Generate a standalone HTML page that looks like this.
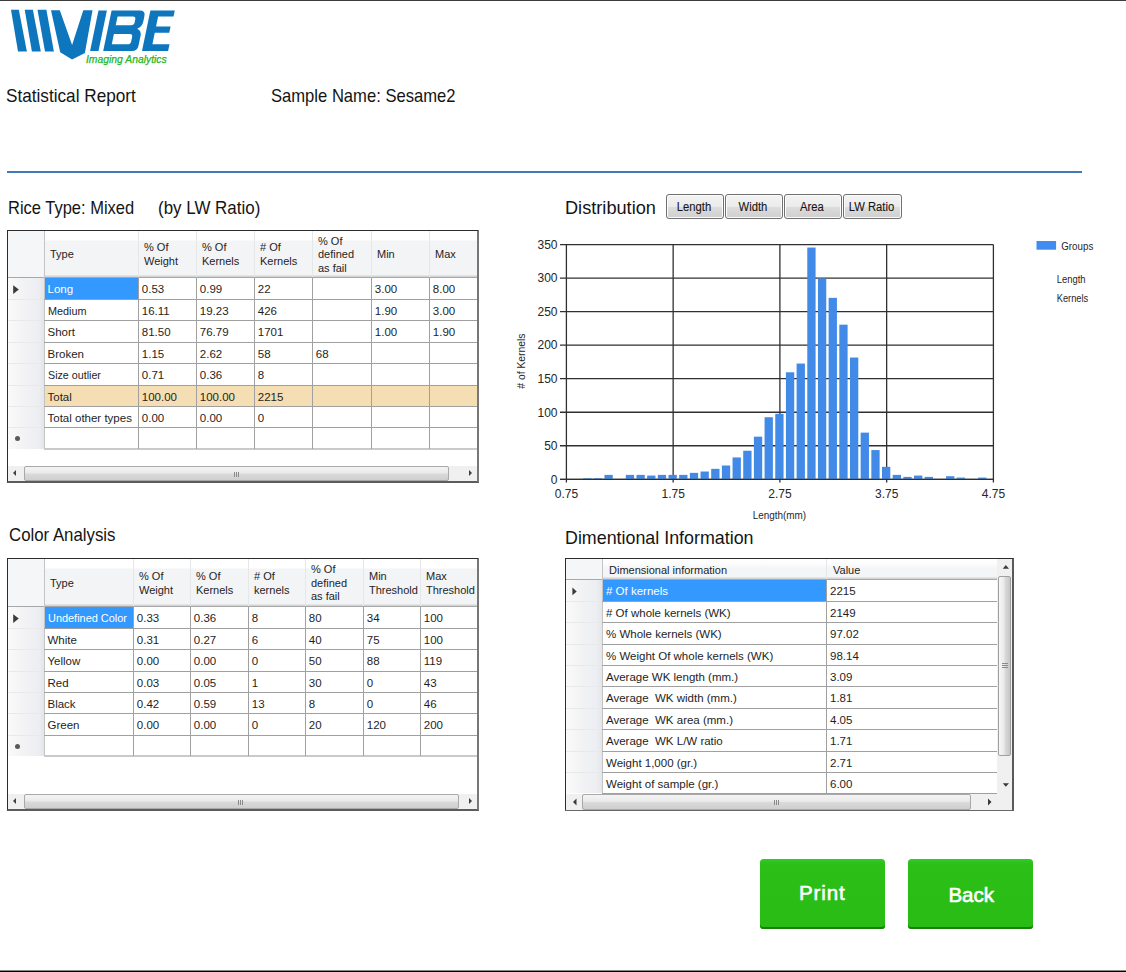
<!DOCTYPE html><html><head><meta charset="utf-8"><style>
*{margin:0;padding:0;box-sizing:border-box}
html,body{width:1126px;height:972px;overflow:hidden;background:#fff;font-family:"Liberation Sans",sans-serif;color:#000}
.a{position:absolute;white-space:nowrap}
.h{font-size:17px;color:#1a1a1a;line-height:20px}
.g{font-size:11px;line-height:13px;color:#1e1e1e}
.grid{position:absolute;background:#fff;border:1px solid #404040}
.cl{position:absolute;background:#a0a0a0}
</style></head><body>
<div class="a" style="left:0;top:0;width:1126px;height:1px;background:#3c3c3c"></div>
<div class="a" style="left:0;top:970px;width:1126px;height:1px;background:#8a8a8a"></div>
<div class="a" style="left:0;top:971px;width:1126px;height:1px;background:#000"></div>
<svg class="a" style="left:0;top:0" width="200" height="70" viewBox="0 0 200 70"><polygon fill="#0e76bc" points="11.0,9.7 18.8,9.7 26.9,51.4 18.0,51.4"/><polygon fill="#0e76bc" points="24.7,9.7 32.9,9.7 40.8,51.4 31.9,51.4"/><polygon fill="#0e76bc" points="37.5,9.7 46.4,9.7 53.9,51.4 45.0,51.4"/><polygon fill="#0e76bc" points="51.0,10.2 59.8,10.2 72.1,45.0 83.3,10.2 92.5,10.2 84.9,53.0 72.1,59.4 60.2,52.2"/><polygon fill="#0e76bc" points="98.48,10.50 106.88,10.50 98.50,51.00 90.10,51.00"/><path fill="#0e76bc" fill-rule="evenodd" transform="matrix(1,0,-0.2070,1,10.5570,0)" d="M103.2,10.5 H131.5 Q137.2,10.5 137.2,16 V21.5 Q137.2,26.8 132.6,28.7 Q137.4,30.6 137.4,36 V45.5 Q137.4,51 131.9,51 H103.2 Z M110.4,16.4 H125.9 Q128.7,16.4 128.7,19.2 V22.5 Q128.7,25.3 125.9,25.3 H110.4 Z M110.4,34.1 H126.4 Q129.2,34.1 129.2,36.9 V41.4 Q129.2,44.2 126.4,44.2 H110.4 Z"/><path fill="#0e76bc" transform="matrix(1,0,-0.2070,1,10.5570,0)" d="M142,10.5 H166.4 V16.6 H151 V26.6 H165.5 V32.8 H151 V44.2 H168.1 V51 H142 Z"/></svg>
<div class="a" style="left:86px;top:53px;font-size:10.5px;line-height:12px;font-style:italic;color:#22b622;-webkit-text-stroke:0.25px #22b622;transform:scaleX(0.985);transform-origin:0 0">Imaging Analytics</div>
<div class="a" style="left:6.2px;top:87.34px;font-size:18.5px;line-height:18.5px;color:#141414;transform:scaleX(0.9281);transform-origin:0 0">Statistical Report</div>
<div class="a" style="left:270.7px;top:87.14px;font-size:18.5px;line-height:18.5px;color:#141414;transform:scaleX(0.8971);transform-origin:0 0">Sample Name: Sesame2</div>
<div class="a" style="left:7px;top:171px;width:1075px;height:2px;background:#4079b3"></div>
<div class="a" style="left:7.8px;top:199.34px;font-size:18.5px;line-height:18.5px;color:#141414;transform:scaleX(0.8914);transform-origin:0 0">Rice Type: Mixed</div>
<div class="a" style="left:158.3px;top:199.34px;font-size:18.5px;line-height:18.5px;color:#141414;transform:scaleX(0.9155);transform-origin:0 0">(by LW Ratio)</div>
<div class="a" style="left:565.0px;top:199.14px;font-size:18.5px;line-height:18.5px;color:#141414;transform:scaleX(0.9824);transform-origin:0 0">Distribution</div>
<div class="a" style="left:8.7px;top:526.34px;font-size:18.5px;line-height:18.5px;color:#141414;transform:scaleX(0.9086);transform-origin:0 0">Color Analysis</div>
<div class="a" style="left:565.4px;top:529.04px;font-size:18.5px;line-height:18.5px;color:#141414;transform:scaleX(0.9648);transform-origin:0 0">Dimentional Information</div>
<div class="a" style="left:7px;top:230px;width:472px;height:253px;border-style:solid;border-width:1px 2px 2px 1px;border-color:#2c2c2c #777 #5c5c5c #2c2c2c;background:#fff"></div>
<div class="a" style="left:45px;top:231px;width:432px;height:44px;background:linear-gradient(#fff 0,#fff 9px,#f3f4f6 10px,#f3f4f6 100%)"></div>
<div class="a" style="left:45px;top:275px;width:432px;height:1px;background:#e2e3e5"></div>
<div class="a" style="left:45px;top:276px;width:432px;height:1px;background:#d5d5d5"></div>
<div class="a" style="left:8px;top:277px;width:469px;height:1px;background:#a8a8a8"></div>
<div class="a" style="left:8px;top:231px;width:36px;height:46px;background:#f5f6f8"></div>
<div class="a" style="left:8px;top:278px;width:36px;height:171px;background:linear-gradient(90deg,#fafafa 0,#f3f3f5 40%,#eceef1 85%,#e4e5e8 100%)"></div>
<div class="a" style="left:44px;top:231px;width:1px;height:219px;background:#c4c4c4"></div>
<div class="a" style="left:138px;top:231px;width:1px;height:46px;background:#e6e7e9"></div>
<div class="a" style="left:196px;top:231px;width:1px;height:46px;background:#e6e7e9"></div>
<div class="a" style="left:254px;top:231px;width:1px;height:46px;background:#e6e7e9"></div>
<div class="a" style="left:312px;top:231px;width:1px;height:46px;background:#e6e7e9"></div>
<div class="a" style="left:371px;top:231px;width:1px;height:46px;background:#e6e7e9"></div>
<div class="a" style="left:429px;top:231px;width:1px;height:46px;background:#e6e7e9"></div>
<div class="a" style="left:45px;top:386px;width:432px;height:20px;background:#f5deb3"></div>
<div class="a" style="left:45px;top:278px;width:93px;height:21px;background:#3399ff"></div>
<div class="a" style="left:8px;top:299px;width:36px;height:1px;background:#e8e9eb"></div>
<div class="a" style="left:8px;top:320px;width:36px;height:1px;background:#e8e9eb"></div>
<div class="a" style="left:8px;top:342px;width:36px;height:1px;background:#e8e9eb"></div>
<div class="a" style="left:8px;top:363px;width:36px;height:1px;background:#e8e9eb"></div>
<div class="a" style="left:8px;top:385px;width:36px;height:1px;background:#e8e9eb"></div>
<div class="a" style="left:8px;top:406px;width:36px;height:1px;background:#e8e9eb"></div>
<div class="a" style="left:8px;top:427px;width:36px;height:1px;background:#e8e9eb"></div>
<div class="a cl" style="left:44px;top:299px;width:433px;height:1px"></div>
<div class="a cl" style="left:44px;top:320px;width:433px;height:1px"></div>
<div class="a cl" style="left:44px;top:342px;width:433px;height:1px"></div>
<div class="a cl" style="left:44px;top:363px;width:433px;height:1px"></div>
<div class="a cl" style="left:44px;top:385px;width:433px;height:1px"></div>
<div class="a cl" style="left:44px;top:406px;width:433px;height:1px"></div>
<div class="a cl" style="left:44px;top:427px;width:433px;height:1px"></div>
<div class="a" style="left:44px;top:448px;width:433px;height:2px;background:#cacaca"></div>
<div class="a cl" style="left:138px;top:278px;width:1px;height:171px"></div>
<div class="a cl" style="left:196px;top:278px;width:1px;height:171px"></div>
<div class="a cl" style="left:254px;top:278px;width:1px;height:171px"></div>
<div class="a cl" style="left:312px;top:278px;width:1px;height:171px"></div>
<div class="a cl" style="left:371px;top:278px;width:1px;height:171px"></div>
<div class="a cl" style="left:429px;top:278px;width:1px;height:171px"></div>
<div class="a" style="left:50.0px;top:248.29px;font-size:11px;line-height:13px;color:#1e1e1e;">Type</div>
<div class="a" style="left:144.0px;top:241.44px;font-size:11px;line-height:13px;color:#1e1e1e;">% Of</div>
<div class="a" style="left:144.0px;top:255.14px;font-size:11px;line-height:13px;color:#1e1e1e;">Weight</div>
<div class="a" style="left:202.0px;top:241.44px;font-size:11px;line-height:13px;color:#1e1e1e;">% Of</div>
<div class="a" style="left:202.0px;top:255.14px;font-size:11px;line-height:13px;color:#1e1e1e;">Kernels</div>
<div class="a" style="left:260.0px;top:241.44px;font-size:11px;line-height:13px;color:#1e1e1e;"># Of</div>
<div class="a" style="left:260.0px;top:255.14px;font-size:11px;line-height:13px;color:#1e1e1e;">Kernels</div>
<div class="a" style="left:318.0px;top:234.59px;font-size:11px;line-height:13px;color:#1e1e1e;">% Of</div>
<div class="a" style="left:318.0px;top:248.29px;font-size:11px;line-height:13px;color:#1e1e1e;">defined</div>
<div class="a" style="left:318.0px;top:261.99px;font-size:11px;line-height:13px;color:#1e1e1e;">as fail</div>
<div class="a" style="left:377.0px;top:248.29px;font-size:11px;line-height:13px;color:#1e1e1e;">Min</div>
<div class="a" style="left:435.0px;top:248.29px;font-size:11px;line-height:13px;color:#1e1e1e;">Max</div>
<div class="a" style="left:47.5px;top:282.32px;font-size:11.5px;line-height:14px;color:#fff;">Long</div>
<div class="a" style="left:141.8px;top:282.32px;font-size:11.5px;line-height:14px;color:#1e1e1e;">0.53</div>
<div class="a" style="left:199.8px;top:282.32px;font-size:11.5px;line-height:14px;color:#1e1e1e;">0.99</div>
<div class="a" style="left:257.8px;top:282.32px;font-size:11.5px;line-height:14px;color:#1e1e1e;">22</div>
<div class="a" style="left:374.8px;top:282.32px;font-size:11.5px;line-height:14px;color:#1e1e1e;">3.00</div>
<div class="a" style="left:432.8px;top:282.32px;font-size:11.5px;line-height:14px;color:#1e1e1e;">8.00</div>
<div class="a" style="left:47.5px;top:304.32px;font-size:11.5px;line-height:14px;color:#1e1e1e;transform:scaleX(0.94);transform-origin:0 0">Medium</div>
<div class="a" style="left:141.8px;top:304.32px;font-size:11.5px;line-height:14px;color:#1e1e1e;">16.11</div>
<div class="a" style="left:199.8px;top:304.32px;font-size:11.5px;line-height:14px;color:#1e1e1e;">19.23</div>
<div class="a" style="left:257.8px;top:304.32px;font-size:11.5px;line-height:14px;color:#1e1e1e;">426</div>
<div class="a" style="left:374.8px;top:304.32px;font-size:11.5px;line-height:14px;color:#1e1e1e;">1.90</div>
<div class="a" style="left:432.8px;top:304.32px;font-size:11.5px;line-height:14px;color:#1e1e1e;">3.00</div>
<div class="a" style="left:47.5px;top:325.32px;font-size:11.5px;line-height:14px;color:#1e1e1e;">Short</div>
<div class="a" style="left:141.8px;top:325.32px;font-size:11.5px;line-height:14px;color:#1e1e1e;">81.50</div>
<div class="a" style="left:199.8px;top:325.32px;font-size:11.5px;line-height:14px;color:#1e1e1e;">76.79</div>
<div class="a" style="left:257.8px;top:325.32px;font-size:11.5px;line-height:14px;color:#1e1e1e;">1701</div>
<div class="a" style="left:374.8px;top:325.32px;font-size:11.5px;line-height:14px;color:#1e1e1e;">1.00</div>
<div class="a" style="left:432.8px;top:325.32px;font-size:11.5px;line-height:14px;color:#1e1e1e;">1.90</div>
<div class="a" style="left:47.5px;top:347.32px;font-size:11.5px;line-height:14px;color:#1e1e1e;">Broken</div>
<div class="a" style="left:141.8px;top:347.32px;font-size:11.5px;line-height:14px;color:#1e1e1e;">1.15</div>
<div class="a" style="left:199.8px;top:347.32px;font-size:11.5px;line-height:14px;color:#1e1e1e;">2.62</div>
<div class="a" style="left:257.8px;top:347.32px;font-size:11.5px;line-height:14px;color:#1e1e1e;">58</div>
<div class="a" style="left:315.8px;top:347.32px;font-size:11.5px;line-height:14px;color:#1e1e1e;">68</div>
<div class="a" style="left:47.5px;top:368.32px;font-size:11.5px;line-height:14px;color:#1e1e1e;transform:scaleX(0.93);transform-origin:0 0">Size outlier</div>
<div class="a" style="left:141.8px;top:368.32px;font-size:11.5px;line-height:14px;color:#1e1e1e;">0.71</div>
<div class="a" style="left:199.8px;top:368.32px;font-size:11.5px;line-height:14px;color:#1e1e1e;">0.36</div>
<div class="a" style="left:257.8px;top:368.32px;font-size:11.5px;line-height:14px;color:#1e1e1e;">8</div>
<div class="a" style="left:47.5px;top:390.32px;font-size:11.5px;line-height:14px;color:#1e1e1e;">Total</div>
<div class="a" style="left:141.8px;top:390.32px;font-size:11.5px;line-height:14px;color:#1e1e1e;">100.00</div>
<div class="a" style="left:199.8px;top:390.32px;font-size:11.5px;line-height:14px;color:#1e1e1e;">100.00</div>
<div class="a" style="left:257.8px;top:390.32px;font-size:11.5px;line-height:14px;color:#1e1e1e;">2215</div>
<div class="a" style="left:47.5px;top:411.32px;font-size:11.5px;line-height:14px;color:#1e1e1e;">Total other types</div>
<div class="a" style="left:141.8px;top:411.32px;font-size:11.5px;line-height:14px;color:#1e1e1e;">0.00</div>
<div class="a" style="left:199.8px;top:411.32px;font-size:11.5px;line-height:14px;color:#1e1e1e;">0.00</div>
<div class="a" style="left:257.8px;top:411.32px;font-size:11.5px;line-height:14px;color:#1e1e1e;">0</div>
<svg class="a" style="left:13px;top:285px" width="10" height="12"><polygon points="0.2,0.2 5.8,4.55 0.2,8.9" fill="#3b3b3b"/></svg>
<div class="a" style="left:15px;top:436px;width:5px;height:5px;border-radius:50%;background:#5a5a5a"></div>
<div class="a" style="left:8px;top:466px;width:469px;height:15px;background:#f0f0f0"></div>
<div class="a" style="left:24px;top:466px;width:425px;height:15px;border:1px solid #a9a9a9;border-radius:2px;background:linear-gradient(#f4f4f4 0,#eaeaea 45%,#d9d9d9 55%,#cfcfcf 100%)"></div>
<svg class="a" style="left:12px;top:469px" width="8" height="10"><polygon points="4,1 1,4 4,7" fill="#404040"/></svg>
<svg class="a" style="left:468px;top:469px" width="8" height="10"><polygon points="1,1 4,4 1,7" fill="#404040"/></svg>
<div class="a" style="left:234px;top:472px;width:6px;height:5px;background:repeating-linear-gradient(90deg,#8a8a8a 0,#8a8a8a 1px,transparent 1px,transparent 2px)"></div>
<div class="a" style="left:7px;top:558px;width:472px;height:253px;border-style:solid;border-width:1px 2px 2px 1px;border-color:#2c2c2c #777 #5c5c5c #2c2c2c;background:#fff"></div>
<div class="a" style="left:45px;top:559px;width:432px;height:45px;background:linear-gradient(#fff 0,#fff 9px,#f3f4f6 10px,#f3f4f6 100%)"></div>
<div class="a" style="left:45px;top:604px;width:432px;height:1px;background:#e2e3e5"></div>
<div class="a" style="left:45px;top:605px;width:432px;height:1px;background:#d5d5d5"></div>
<div class="a" style="left:8px;top:606px;width:469px;height:1px;background:#a8a8a8"></div>
<div class="a" style="left:8px;top:559px;width:36px;height:47px;background:#f5f6f8"></div>
<div class="a" style="left:8px;top:607px;width:36px;height:149px;background:linear-gradient(90deg,#fafafa 0,#f3f3f5 40%,#eceef1 85%,#e4e5e8 100%)"></div>
<div class="a" style="left:44px;top:559px;width:1px;height:198px;background:#c4c4c4"></div>
<div class="a" style="left:133px;top:559px;width:1px;height:47px;background:#e6e7e9"></div>
<div class="a" style="left:190px;top:559px;width:1px;height:47px;background:#e6e7e9"></div>
<div class="a" style="left:248px;top:559px;width:1px;height:47px;background:#e6e7e9"></div>
<div class="a" style="left:305px;top:559px;width:1px;height:47px;background:#e6e7e9"></div>
<div class="a" style="left:363px;top:559px;width:1px;height:47px;background:#e6e7e9"></div>
<div class="a" style="left:420px;top:559px;width:1px;height:47px;background:#e6e7e9"></div>
<div class="a" style="left:45px;top:607px;width:88px;height:21px;background:#3399ff"></div>
<div class="a" style="left:8px;top:628px;width:36px;height:1px;background:#e8e9eb"></div>
<div class="a" style="left:8px;top:649px;width:36px;height:1px;background:#e8e9eb"></div>
<div class="a" style="left:8px;top:671px;width:36px;height:1px;background:#e8e9eb"></div>
<div class="a" style="left:8px;top:692px;width:36px;height:1px;background:#e8e9eb"></div>
<div class="a" style="left:8px;top:713px;width:36px;height:1px;background:#e8e9eb"></div>
<div class="a" style="left:8px;top:735px;width:36px;height:1px;background:#e8e9eb"></div>
<div class="a cl" style="left:44px;top:628px;width:433px;height:1px"></div>
<div class="a cl" style="left:44px;top:649px;width:433px;height:1px"></div>
<div class="a cl" style="left:44px;top:671px;width:433px;height:1px"></div>
<div class="a cl" style="left:44px;top:692px;width:433px;height:1px"></div>
<div class="a cl" style="left:44px;top:713px;width:433px;height:1px"></div>
<div class="a cl" style="left:44px;top:735px;width:433px;height:1px"></div>
<div class="a" style="left:44px;top:755px;width:433px;height:2px;background:#cacaca"></div>
<div class="a cl" style="left:133px;top:607px;width:1px;height:149px"></div>
<div class="a cl" style="left:190px;top:607px;width:1px;height:149px"></div>
<div class="a cl" style="left:248px;top:607px;width:1px;height:149px"></div>
<div class="a cl" style="left:305px;top:607px;width:1px;height:149px"></div>
<div class="a cl" style="left:363px;top:607px;width:1px;height:149px"></div>
<div class="a cl" style="left:420px;top:607px;width:1px;height:149px"></div>
<div class="a" style="left:50.0px;top:576.79px;font-size:11px;line-height:13px;color:#1e1e1e;">Type</div>
<div class="a" style="left:139.0px;top:569.94px;font-size:11px;line-height:13px;color:#1e1e1e;">% Of</div>
<div class="a" style="left:139.0px;top:583.64px;font-size:11px;line-height:13px;color:#1e1e1e;">Weight</div>
<div class="a" style="left:196.0px;top:569.94px;font-size:11px;line-height:13px;color:#1e1e1e;">% Of</div>
<div class="a" style="left:196.0px;top:583.64px;font-size:11px;line-height:13px;color:#1e1e1e;">Kernels</div>
<div class="a" style="left:254.0px;top:569.94px;font-size:11px;line-height:13px;color:#1e1e1e;"># Of</div>
<div class="a" style="left:254.0px;top:583.64px;font-size:11px;line-height:13px;color:#1e1e1e;">kernels</div>
<div class="a" style="left:311.0px;top:563.09px;font-size:11px;line-height:13px;color:#1e1e1e;">% Of</div>
<div class="a" style="left:311.0px;top:576.79px;font-size:11px;line-height:13px;color:#1e1e1e;">defined</div>
<div class="a" style="left:311.0px;top:590.49px;font-size:11px;line-height:13px;color:#1e1e1e;">as fail</div>
<div class="a" style="left:369.0px;top:569.94px;font-size:11px;line-height:13px;color:#1e1e1e;">Min</div>
<div class="a" style="left:369.0px;top:583.64px;font-size:11px;line-height:13px;color:#1e1e1e;">Threshold</div>
<div class="a" style="left:426.0px;top:569.94px;font-size:11px;line-height:13px;color:#1e1e1e;">Max</div>
<div class="a" style="left:426.0px;top:583.64px;font-size:11px;line-height:13px;color:#1e1e1e;">Threshold</div>
<div class="a" style="left:47.5px;top:611.32px;font-size:11.5px;line-height:14px;color:#fff;transform:scaleX(0.95);transform-origin:0 0">Undefined Color</div>
<div class="a" style="left:136.8px;top:611.32px;font-size:11.5px;line-height:14px;color:#1e1e1e;">0.33</div>
<div class="a" style="left:193.8px;top:611.32px;font-size:11.5px;line-height:14px;color:#1e1e1e;">0.36</div>
<div class="a" style="left:251.8px;top:611.32px;font-size:11.5px;line-height:14px;color:#1e1e1e;">8</div>
<div class="a" style="left:308.8px;top:611.32px;font-size:11.5px;line-height:14px;color:#1e1e1e;">80</div>
<div class="a" style="left:366.8px;top:611.32px;font-size:11.5px;line-height:14px;color:#1e1e1e;">34</div>
<div class="a" style="left:423.8px;top:611.32px;font-size:11.5px;line-height:14px;color:#1e1e1e;">100</div>
<div class="a" style="left:47.5px;top:633.32px;font-size:11.5px;line-height:14px;color:#1e1e1e;">White</div>
<div class="a" style="left:136.8px;top:633.32px;font-size:11.5px;line-height:14px;color:#1e1e1e;">0.31</div>
<div class="a" style="left:193.8px;top:633.32px;font-size:11.5px;line-height:14px;color:#1e1e1e;">0.27</div>
<div class="a" style="left:251.8px;top:633.32px;font-size:11.5px;line-height:14px;color:#1e1e1e;">6</div>
<div class="a" style="left:308.8px;top:633.32px;font-size:11.5px;line-height:14px;color:#1e1e1e;">40</div>
<div class="a" style="left:366.8px;top:633.32px;font-size:11.5px;line-height:14px;color:#1e1e1e;">75</div>
<div class="a" style="left:423.8px;top:633.32px;font-size:11.5px;line-height:14px;color:#1e1e1e;">100</div>
<div class="a" style="left:47.5px;top:654.32px;font-size:11.5px;line-height:14px;color:#1e1e1e;">Yellow</div>
<div class="a" style="left:136.8px;top:654.32px;font-size:11.5px;line-height:14px;color:#1e1e1e;">0.00</div>
<div class="a" style="left:193.8px;top:654.32px;font-size:11.5px;line-height:14px;color:#1e1e1e;">0.00</div>
<div class="a" style="left:251.8px;top:654.32px;font-size:11.5px;line-height:14px;color:#1e1e1e;">0</div>
<div class="a" style="left:308.8px;top:654.32px;font-size:11.5px;line-height:14px;color:#1e1e1e;">50</div>
<div class="a" style="left:366.8px;top:654.32px;font-size:11.5px;line-height:14px;color:#1e1e1e;">88</div>
<div class="a" style="left:423.8px;top:654.32px;font-size:11.5px;line-height:14px;color:#1e1e1e;">119</div>
<div class="a" style="left:47.5px;top:676.32px;font-size:11.5px;line-height:14px;color:#1e1e1e;">Red</div>
<div class="a" style="left:136.8px;top:676.32px;font-size:11.5px;line-height:14px;color:#1e1e1e;">0.03</div>
<div class="a" style="left:193.8px;top:676.32px;font-size:11.5px;line-height:14px;color:#1e1e1e;">0.05</div>
<div class="a" style="left:251.8px;top:676.32px;font-size:11.5px;line-height:14px;color:#1e1e1e;">1</div>
<div class="a" style="left:308.8px;top:676.32px;font-size:11.5px;line-height:14px;color:#1e1e1e;">30</div>
<div class="a" style="left:366.8px;top:676.32px;font-size:11.5px;line-height:14px;color:#1e1e1e;">0</div>
<div class="a" style="left:423.8px;top:676.32px;font-size:11.5px;line-height:14px;color:#1e1e1e;">43</div>
<div class="a" style="left:47.5px;top:697.32px;font-size:11.5px;line-height:14px;color:#1e1e1e;">Black</div>
<div class="a" style="left:136.8px;top:697.32px;font-size:11.5px;line-height:14px;color:#1e1e1e;">0.42</div>
<div class="a" style="left:193.8px;top:697.32px;font-size:11.5px;line-height:14px;color:#1e1e1e;">0.59</div>
<div class="a" style="left:251.8px;top:697.32px;font-size:11.5px;line-height:14px;color:#1e1e1e;">13</div>
<div class="a" style="left:308.8px;top:697.32px;font-size:11.5px;line-height:14px;color:#1e1e1e;">8</div>
<div class="a" style="left:366.8px;top:697.32px;font-size:11.5px;line-height:14px;color:#1e1e1e;">0</div>
<div class="a" style="left:423.8px;top:697.32px;font-size:11.5px;line-height:14px;color:#1e1e1e;">46</div>
<div class="a" style="left:47.5px;top:718.32px;font-size:11.5px;line-height:14px;color:#1e1e1e;">Green</div>
<div class="a" style="left:136.8px;top:718.32px;font-size:11.5px;line-height:14px;color:#1e1e1e;">0.00</div>
<div class="a" style="left:193.8px;top:718.32px;font-size:11.5px;line-height:14px;color:#1e1e1e;">0.00</div>
<div class="a" style="left:251.8px;top:718.32px;font-size:11.5px;line-height:14px;color:#1e1e1e;">0</div>
<div class="a" style="left:308.8px;top:718.32px;font-size:11.5px;line-height:14px;color:#1e1e1e;">20</div>
<div class="a" style="left:366.8px;top:718.32px;font-size:11.5px;line-height:14px;color:#1e1e1e;">120</div>
<div class="a" style="left:423.8px;top:718.32px;font-size:11.5px;line-height:14px;color:#1e1e1e;">200</div>
<svg class="a" style="left:13px;top:614px" width="10" height="12"><polygon points="0.2,0.2 5.8,4.55 0.2,8.9" fill="#3b3b3b"/></svg>
<div class="a" style="left:15px;top:744px;width:5px;height:5px;border-radius:50%;background:#5a5a5a"></div>
<div class="a" style="left:8px;top:794px;width:469px;height:15px;background:#f0f0f0"></div>
<div class="a" style="left:24px;top:794px;width:435px;height:15px;border:1px solid #a9a9a9;border-radius:2px;background:linear-gradient(#f4f4f4 0,#eaeaea 45%,#d9d9d9 55%,#cfcfcf 100%)"></div>
<svg class="a" style="left:12px;top:797px" width="8" height="10"><polygon points="4,1 1,4 4,7" fill="#404040"/></svg>
<svg class="a" style="left:468px;top:797px" width="8" height="10"><polygon points="1,1 4,4 1,7" fill="#404040"/></svg>
<div class="a" style="left:238px;top:800px;width:6px;height:5px;background:repeating-linear-gradient(90deg,#8a8a8a 0,#8a8a8a 1px,transparent 1px,transparent 2px)"></div>
<div class="a" style="left:565px;top:558px;width:449px;height:253px;border-style:solid;border-width:1px 2px 2px 1px;border-color:#2c2c2c #5a5a5a #686868 #2c2c2c;background:#fff"></div>
<div class="a" style="left:603px;top:559px;width:394px;height:18px;background:linear-gradient(#fff 0,#fcfcfd 5px,#f4f5f7 9px,#f4f5f7 100%)"></div>
<div class="a" style="left:603px;top:577px;width:394px;height:1px;background:#e2e3e5"></div>
<div class="a" style="left:603px;top:578px;width:394px;height:1px;background:#d5d5d5"></div>
<div class="a" style="left:566px;top:579px;width:431px;height:1px;background:#a8a8a8"></div>
<div class="a" style="left:566px;top:559px;width:36px;height:20px;background:#f5f6f8"></div>
<div class="a" style="left:566px;top:580px;width:36px;height:213px;background:linear-gradient(90deg,#fafafa 0,#f3f3f5 40%,#eceef1 85%,#e4e5e8 100%)"></div>
<div class="a" style="left:602px;top:559px;width:1px;height:235px;background:#c4c4c4"></div>
<div class="a" style="left:826px;top:559px;width:1px;height:20px;background:#e6e7e9"></div>
<div class="a" style="left:603px;top:580px;width:223px;height:21px;background:#3399ff"></div>
<div class="a" style="left:566px;top:601px;width:36px;height:1px;background:#e8e9eb"></div>
<div class="a" style="left:566px;top:622px;width:36px;height:1px;background:#e8e9eb"></div>
<div class="a" style="left:566px;top:644px;width:36px;height:1px;background:#e8e9eb"></div>
<div class="a" style="left:566px;top:665px;width:36px;height:1px;background:#e8e9eb"></div>
<div class="a" style="left:566px;top:686px;width:36px;height:1px;background:#e8e9eb"></div>
<div class="a" style="left:566px;top:708px;width:36px;height:1px;background:#e8e9eb"></div>
<div class="a" style="left:566px;top:729px;width:36px;height:1px;background:#e8e9eb"></div>
<div class="a" style="left:566px;top:751px;width:36px;height:1px;background:#e8e9eb"></div>
<div class="a" style="left:566px;top:772px;width:36px;height:1px;background:#e8e9eb"></div>
<div class="a cl" style="left:602px;top:601px;width:395px;height:1px"></div>
<div class="a cl" style="left:602px;top:622px;width:395px;height:1px"></div>
<div class="a cl" style="left:602px;top:644px;width:395px;height:1px"></div>
<div class="a cl" style="left:602px;top:665px;width:395px;height:1px"></div>
<div class="a cl" style="left:602px;top:686px;width:395px;height:1px"></div>
<div class="a cl" style="left:602px;top:708px;width:395px;height:1px"></div>
<div class="a cl" style="left:602px;top:729px;width:395px;height:1px"></div>
<div class="a cl" style="left:602px;top:751px;width:395px;height:1px"></div>
<div class="a cl" style="left:602px;top:772px;width:395px;height:1px"></div>
<div class="a cl" style="left:602px;top:793px;width:395px;height:1px"></div>
<div class="a cl" style="left:826px;top:580px;width:1px;height:214px"></div>
<div class="a" style="left:609.0px;top:563.69px;font-size:11px;line-height:13px;color:#1e1e1e;">Dimensional information</div>
<div class="a" style="left:833.0px;top:563.69px;font-size:11px;line-height:13px;color:#1e1e1e;">Value</div>
<div class="a" style="left:606.0px;top:584.02px;font-size:11.5px;line-height:14px;color:#fff;"># Of kernels</div>
<div class="a" style="left:830.0px;top:584.02px;font-size:11.5px;line-height:14px;color:#1e1e1e;">2215</div>
<div class="a" style="left:606.0px;top:606.02px;font-size:11.5px;line-height:14px;color:#1e1e1e;"># Of whole kernels (WK)</div>
<div class="a" style="left:830.0px;top:606.02px;font-size:11.5px;line-height:14px;color:#1e1e1e;">2149</div>
<div class="a" style="left:606.0px;top:627.02px;font-size:11.5px;line-height:14px;color:#1e1e1e;">% Whole kernels (WK)</div>
<div class="a" style="left:830.0px;top:627.02px;font-size:11.5px;line-height:14px;color:#1e1e1e;">97.02</div>
<div class="a" style="left:606.0px;top:649.02px;font-size:11.5px;line-height:14px;color:#1e1e1e;">% Weight Of whole kernels (WK)</div>
<div class="a" style="left:830.0px;top:649.02px;font-size:11.5px;line-height:14px;color:#1e1e1e;">98.14</div>
<div class="a" style="left:606.0px;top:670.02px;font-size:11.5px;line-height:14px;color:#1e1e1e;">Average WK length (mm.)</div>
<div class="a" style="left:830.0px;top:670.02px;font-size:11.5px;line-height:14px;color:#1e1e1e;">3.09</div>
<div class="a" style="left:606.0px;top:691.02px;font-size:11.5px;line-height:14px;color:#1e1e1e;">Average&nbsp; WK width (mm.)</div>
<div class="a" style="left:830.0px;top:691.02px;font-size:11.5px;line-height:14px;color:#1e1e1e;">1.81</div>
<div class="a" style="left:606.0px;top:713.02px;font-size:11.5px;line-height:14px;color:#1e1e1e;">Average&nbsp; WK area (mm.)</div>
<div class="a" style="left:830.0px;top:713.02px;font-size:11.5px;line-height:14px;color:#1e1e1e;">4.05</div>
<div class="a" style="left:606.0px;top:734.02px;font-size:11.5px;line-height:14px;color:#1e1e1e;">Average&nbsp; WK L/W ratio</div>
<div class="a" style="left:830.0px;top:734.02px;font-size:11.5px;line-height:14px;color:#1e1e1e;">1.71</div>
<div class="a" style="left:606.0px;top:756.02px;font-size:11.5px;line-height:14px;color:#1e1e1e;">Weight 1,000 (gr.)</div>
<div class="a" style="left:830.0px;top:756.02px;font-size:11.5px;line-height:14px;color:#1e1e1e;">2.71</div>
<div class="a" style="left:606.0px;top:777.02px;font-size:11.5px;line-height:14px;color:#1e1e1e;">Weight of sample (gr.)</div>
<div class="a" style="left:830.0px;top:777.02px;font-size:11.5px;line-height:14px;color:#1e1e1e;">6.00</div>
<svg class="a" style="left:572px;top:587px" width="10" height="12"><polygon points="0.4,0.5 4.7,4.4 0.4,8.3" fill="#3b3b3b"/></svg>
<div class="a" style="left:997px;top:559px;width:15px;height:235px;background:#f0f0f0"></div>
<div class="a" style="left:998px;top:576px;width:13px;height:180px;border:1px solid #a0a0a0;border-radius:2px;background:linear-gradient(90deg,#f6f6f6 0,#ececec 40%,#d8d8d8 60%,#c6c6c6 100%)"></div>
<svg class="a" style="left:1002px;top:563px" width="10" height="8"><polygon points="0.8,5.8 3.8,2 7,5.8" fill="#3a3a3a"/></svg>
<svg class="a" style="left:1002px;top:782px" width="10" height="8"><polygon points="0.8,1.2 3.8,4.8 7,1.2" fill="#3a3a3a"/></svg>
<div class="a" style="left:1002px;top:663px;width:6px;height:6px;background:repeating-linear-gradient(#8a8a8a 0,#8a8a8a 1px,transparent 1px,transparent 2px)"></div>
<div class="a" style="left:566px;top:794px;width:446px;height:16px;background:#f0f0f0"></div>
<div class="a" style="left:582px;top:794px;width:389px;height:16px;border:1px solid #a9a9a9;border-radius:2px;background:linear-gradient(#f4f4f4 0,#eaeaea 45%,#d9d9d9 55%,#cfcfcf 100%)"></div>
<svg class="a" style="left:571px;top:797px" width="8" height="10"><polygon points="5.5,1.5 2,5 5.5,8.5" fill="#3a3a3a"/></svg>
<svg class="a" style="left:986px;top:797px" width="8" height="10"><polygon points="2,1.5 5.5,5 2,8.5" fill="#3a3a3a"/></svg>
<div class="a" style="left:774px;top:800px;width:6px;height:5px;background:repeating-linear-gradient(90deg,#8a8a8a 0,#8a8a8a 1px,transparent 1px,transparent 2px)"></div>
<div class="a" style="left:666px;top:194px;width:58px;height:25px;border:1px solid #707070;border-radius:3px;background:linear-gradient(#f3f3f3 0,#ebebeb 50%,#dddddd 51%,#cfcfcf 100%);box-shadow:inset 0 0 0 1px #fcfcfc"></div>
<div class="a" style="left:665.2px;top:195.1px;width:58px;height:25px;line-height:25px;text-align:center;font-size:12.5px;color:#151515;transform:scaleX(0.9);-webkit-text-stroke:0.1px #151515">Length</div>
<div class="a" style="left:725px;top:194px;width:58px;height:25px;border:1px solid #707070;border-radius:3px;background:linear-gradient(#f3f3f3 0,#ebebeb 50%,#dddddd 51%,#cfcfcf 100%);box-shadow:inset 0 0 0 1px #fcfcfc"></div>
<div class="a" style="left:724.2px;top:195.1px;width:58px;height:25px;line-height:25px;text-align:center;font-size:12.5px;color:#151515;transform:scaleX(0.9);-webkit-text-stroke:0.1px #151515">Width</div>
<div class="a" style="left:784px;top:194px;width:58px;height:25px;border:1px solid #707070;border-radius:3px;background:linear-gradient(#f3f3f3 0,#ebebeb 50%,#dddddd 51%,#cfcfcf 100%);box-shadow:inset 0 0 0 1px #fcfcfc"></div>
<div class="a" style="left:783.2px;top:195.1px;width:58px;height:25px;line-height:25px;text-align:center;font-size:12.5px;color:#151515;transform:scaleX(0.9);-webkit-text-stroke:0.1px #151515">Area</div>
<div class="a" style="left:843px;top:194px;width:59px;height:25px;border:1px solid #707070;border-radius:3px;background:linear-gradient(#f3f3f3 0,#ebebeb 50%,#dddddd 51%,#cfcfcf 100%);box-shadow:inset 0 0 0 1px #fcfcfc"></div>
<div class="a" style="left:842.2px;top:195.1px;width:59px;height:25px;line-height:25px;text-align:center;font-size:12.5px;color:#151515;transform:scaleX(0.9);-webkit-text-stroke:0.1px #151515">LW Ratio</div>
<div class="a" style="left:760px;top:859px;width:125px;height:70px;border-radius:3.5px;background:linear-gradient(#28d80c 0,#2fc524 2px,#2bbf18 5px,#29bc14 100%);box-shadow:inset 0 -2px 0 #168008"></div>
<div class="a" style="left:908px;top:859px;width:125px;height:70px;border-radius:3.5px;background:linear-gradient(#28d80c 0,#2fc524 2px,#2bbf18 5px,#29bc14 100%);box-shadow:inset 0 -2px 0 #168008"></div>
<div class="a" style="left:798.9px;top:880px;line-height:26px;font-size:20.5px;color:#fff;-webkit-text-stroke:0.6px #fff;letter-spacing:0.9px">Print</div>
<div class="a" style="left:948.4px;top:882px;line-height:26px;font-size:20.5px;color:#fff;-webkit-text-stroke:0.6px #fff;letter-spacing:0px">Back</div>
<svg class="a" style="left:0;top:0" width="1126" height="540" viewBox="0 0 1126 540"><line x1="560" x2="993.4" y1="479.30" y2="479.30" stroke="#303030" stroke-width="1.3"/><text x="557.5" y="483.60" font-size="12" text-anchor="end" fill="#262626" font-family="Liberation Sans">0</text><line x1="560" x2="993.4" y1="445.77" y2="445.77" stroke="#303030" stroke-width="1.3"/><text x="557.5" y="450.07" font-size="12" text-anchor="end" fill="#262626" font-family="Liberation Sans">50</text><line x1="560" x2="993.4" y1="412.24" y2="412.24" stroke="#303030" stroke-width="1.3"/><text x="557.5" y="416.54" font-size="12" text-anchor="end" fill="#262626" font-family="Liberation Sans">100</text><line x1="560" x2="993.4" y1="378.71" y2="378.71" stroke="#303030" stroke-width="1.3"/><text x="557.5" y="383.01" font-size="12" text-anchor="end" fill="#262626" font-family="Liberation Sans">150</text><line x1="560" x2="993.4" y1="345.19" y2="345.19" stroke="#303030" stroke-width="1.3"/><text x="557.5" y="349.49" font-size="12" text-anchor="end" fill="#262626" font-family="Liberation Sans">200</text><line x1="560" x2="993.4" y1="311.66" y2="311.66" stroke="#303030" stroke-width="1.3"/><text x="557.5" y="315.96" font-size="12" text-anchor="end" fill="#262626" font-family="Liberation Sans">250</text><line x1="560" x2="993.4" y1="278.13" y2="278.13" stroke="#303030" stroke-width="1.3"/><text x="557.5" y="282.43" font-size="12" text-anchor="end" fill="#262626" font-family="Liberation Sans">300</text><line x1="560" x2="993.4" y1="244.60" y2="244.60" stroke="#303030" stroke-width="1.3"/><text x="557.5" y="248.90" font-size="12" text-anchor="end" fill="#262626" font-family="Liberation Sans">350</text><line x1="566.40" x2="566.40" y1="244.6" y2="482.5" stroke="#303030" stroke-width="1.3"/><text x="566.40" y="497.6" font-size="12" text-anchor="middle" fill="#262626" font-family="Liberation Sans">0.75</text><line x1="673.15" x2="673.15" y1="244.6" y2="482.5" stroke="#303030" stroke-width="1.3"/><text x="673.15" y="497.6" font-size="12" text-anchor="middle" fill="#262626" font-family="Liberation Sans">1.75</text><line x1="779.90" x2="779.90" y1="244.6" y2="482.5" stroke="#303030" stroke-width="1.3"/><text x="779.90" y="497.6" font-size="12" text-anchor="middle" fill="#262626" font-family="Liberation Sans">2.75</text><line x1="886.65" x2="886.65" y1="244.6" y2="482.5" stroke="#303030" stroke-width="1.3"/><text x="886.65" y="497.6" font-size="12" text-anchor="middle" fill="#262626" font-family="Liberation Sans">3.75</text><line x1="993.40" x2="993.40" y1="244.6" y2="482.5" stroke="#303030" stroke-width="1.3"/><text x="993.40" y="497.6" font-size="12" text-anchor="middle" fill="#262626" font-family="Liberation Sans">4.75</text><rect x="583.10" y="478.23" width="8.3" height="0.67" fill="#418ae8"/><rect x="593.77" y="478.23" width="8.3" height="0.67" fill="#418ae8"/><rect x="604.45" y="474.88" width="8.3" height="4.02" fill="#418ae8"/><rect x="625.80" y="474.88" width="8.3" height="4.02" fill="#418ae8"/><rect x="636.48" y="474.88" width="8.3" height="4.02" fill="#418ae8"/><rect x="647.15" y="475.55" width="8.3" height="3.35" fill="#418ae8"/><rect x="657.83" y="474.88" width="8.3" height="4.02" fill="#418ae8"/><rect x="668.50" y="474.88" width="8.3" height="4.02" fill="#418ae8"/><rect x="679.18" y="474.88" width="8.3" height="4.02" fill="#418ae8"/><rect x="689.85" y="472.86" width="8.3" height="6.04" fill="#418ae8"/><rect x="700.53" y="471.52" width="8.3" height="7.38" fill="#418ae8"/><rect x="711.20" y="468.84" width="8.3" height="10.06" fill="#418ae8"/><rect x="721.88" y="465.49" width="8.3" height="13.41" fill="#418ae8"/><rect x="732.55" y="457.44" width="8.3" height="21.46" fill="#418ae8"/><rect x="743.23" y="450.74" width="8.3" height="28.16" fill="#418ae8"/><rect x="753.90" y="436.65" width="8.3" height="42.25" fill="#418ae8"/><rect x="764.58" y="417.21" width="8.3" height="61.69" fill="#418ae8"/><rect x="775.25" y="413.85" width="8.3" height="65.05" fill="#418ae8"/><rect x="785.93" y="372.28" width="8.3" height="106.62" fill="#418ae8"/><rect x="796.60" y="363.56" width="8.3" height="115.34" fill="#418ae8"/><rect x="807.28" y="247.55" width="8.3" height="231.35" fill="#418ae8"/><rect x="817.95" y="278.40" width="8.3" height="200.50" fill="#418ae8"/><rect x="828.62" y="297.85" width="8.3" height="181.05" fill="#418ae8"/><rect x="839.30" y="324.67" width="8.3" height="154.23" fill="#418ae8"/><rect x="849.98" y="357.53" width="8.3" height="121.37" fill="#418ae8"/><rect x="860.65" y="432.63" width="8.3" height="46.27" fill="#418ae8"/><rect x="871.33" y="450.07" width="8.3" height="28.83" fill="#418ae8"/><rect x="882.00" y="466.83" width="8.3" height="12.07" fill="#418ae8"/><rect x="892.68" y="474.88" width="8.3" height="4.02" fill="#418ae8"/><rect x="903.35" y="476.89" width="8.3" height="2.01" fill="#418ae8"/><rect x="914.03" y="475.55" width="8.3" height="3.35" fill="#418ae8"/><rect x="924.70" y="476.89" width="8.3" height="2.01" fill="#418ae8"/><rect x="946.05" y="476.22" width="8.3" height="2.68" fill="#418ae8"/><rect x="956.73" y="477.56" width="8.3" height="1.34" fill="#418ae8"/><rect x="978.08" y="477.56" width="8.3" height="1.34" fill="#418ae8"/><line x1="560" x2="993.4" y1="479.30" y2="479.30" stroke="#303030" stroke-width="1.3"/><text transform="translate(752.8,518.6) scale(0.9,1)" font-size="11" fill="#262626" font-family="Liberation Sans">Length(mm)</text><text transform="translate(524.8,388.7) rotate(-90) scale(0.94,1)" font-size="11" fill="#262626" font-family="Liberation Sans"># of Kernels</text><rect x="1036.5" y="241" width="19.6" height="8.7" fill="#418cf0"/><text transform="translate(1061.2,249.7) scale(0.89,1)" font-size="11" fill="#262626" font-family="Liberation Sans">Groups</text><text transform="translate(1056.7,282.6) scale(0.86,1)" font-size="11" fill="#262626" font-family="Liberation Sans">Length</text><text transform="translate(1056.7,302.4) scale(0.845,1)" font-size="11" fill="#262626" font-family="Liberation Sans">Kernels</text></svg>
</body></html>
